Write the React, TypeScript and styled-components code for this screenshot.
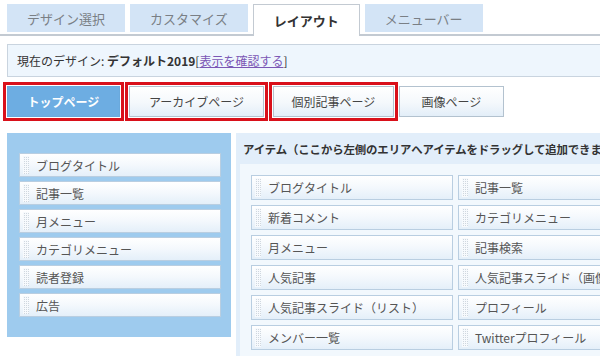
import React from "react";
import styled, { createGlobalStyle } from "styled-components";

const Global = createGlobalStyle`
  html, body { margin: 0; padding: 0; background: #fff; overflow: hidden; }
  body { font-family: "Noto Sans CJK JP", "Noto Sans", sans-serif; color: #444; width: 600px; height: 356px; }
`;

const Page = styled.div`
  width: 600px;
  height: 356px;
  overflow: hidden;
`;

const TabBar = styled.div`
  display: flex;
  align-items: flex-end;
  gap: 5px;
  height: 34px;
  padding-left: 7px;
  border-bottom: 2px solid #c3cad2;
  width: 900px;
`;

const Tab = styled.div<{ $active?: boolean }>`
  display: flex;
  align-items: center;
  justify-content: center;
  box-sizing: border-box;
  padding: 0 20px;
  min-width: ${(p) => (p.$active ? "106px" : "116px")};
  height: ${(p) => (p.$active ? "32px" : "28px")};
  margin-bottom: ${(p) => (p.$active ? "-2px" : "2px")};
  background: ${(p) => (p.$active ? "#fff" : "#d3e4f6")};
  border: ${(p) => (p.$active ? "1px solid #c3cad2" : "none")};
  border-bottom: none;
  font-size: 13px;
  font-weight: ${(p) => (p.$active ? 700 : 400)};
  color: ${(p) => (p.$active ? "#333" : "#7a7f85")};
`;

const Info = styled.div`
  margin: 8px 0 0 7px;
  width: 700px;
  height: 33px;
  box-sizing: border-box;
  background: #eef6fd;
  border: 1px solid #c9d4df;
  display: flex;
  align-items: center;
  padding-left: 9px;
  font-size: 12px;
  color: #333;
  white-space: pre;
`;

const Bold = styled.b`
  font-weight: 700;
`;

const Link = styled.span`
  color: #7b57b5;
  text-decoration: underline;
`;

const ButtonRow = styled.div`
  display: flex;
  align-items: center;
  gap: 1px;
  margin: 5px 0 0 3px;
  height: 39px;
`;

const Slot = styled.div<{ $mark?: boolean }>`
  box-sizing: border-box;
  height: 39px;
  display: flex;
  align-items: center;
  padding: ${(p) => (p.$mark ? "0 1px" : "0")};
  border: ${(p) => (p.$mark ? "3px solid #d9101a" : "none")};
`;

const PageButton = styled.div<{ $selected?: boolean; $w: number }>`
  box-sizing: border-box;
  width: ${(p) => p.$w}px;
  height: 31px;
  display: flex;
  align-items: center;
  justify-content: center;
  font-size: 12px;
  border: 1px solid ${(p) => (p.$selected ? "#6aa9dc" : "#b3c2cf")};
  background: ${(p) =>
    p.$selected ? "#6dade2" : "linear-gradient(#ffffff, #f4f8fc 55%, #e3eef8)"};
  color: ${(p) => (p.$selected ? "#fff" : "#444")};
  font-weight: ${(p) => (p.$selected ? 700 : 400)};
`;

const Main = styled.div`
  display: flex;
  align-items: flex-start;
  gap: 5px;
  margin: 12px 0 0 7px;
`;

const LeftPanel = styled.div`
  flex: none;
  width: 224px;
  box-sizing: border-box;
  background: #9ecbee;
  padding: 20px 10px 20px 12px;
  display: flex;
  flex-direction: column;
  gap: 4px;
`;

const RightPanel = styled.div`
  flex: none;
  width: 420px;
  height: 240px;
  background: #e2eefa;
  padding-left: 4px;
  box-sizing: border-box;
`;

const RightHeader = styled.div`
  height: 31px;
  display: flex;
  align-items: center;
  padding-left: 3px;
  font-size: 11.4px;
  font-weight: 700;
  color: #333;
  white-space: nowrap;
  letter-spacing: -0.1px;
`;

const RightBody = styled.div`
  background: #f2f8fd;
  height: 220px;
  padding: 11px 0 0 11px;
  display: grid;
  grid-template-columns: 202px 202px;
  grid-auto-rows: 25px;
  column-gap: 5px;
  row-gap: 5px;
  align-content: start;
`;

const Item = styled.div<{ $h?: number }>`
  box-sizing: border-box;
  height: ${(p) => p.$h ?? 25}px;
  display: flex;
  align-items: center;
  background: linear-gradient(#ffffff, #f5f9fd 45%, #e4eff9);
  border: 1px solid #b9cee1;
  font-size: 12px;
  color: #555;
  white-space: nowrap;
  overflow: hidden;
`;

const Grip = styled.span`
  width: 6px;
  height: calc(100% - 4px);
  margin: 0 7px 0 3px;
  flex: none;
  background-color: #cfd7df;
  background-image: linear-gradient(90deg, #f7fafd 1px, transparent 1px),
    linear-gradient(#f7fafd 1px, transparent 1px);
  background-size: 2px 2px;
`;

const leftItems = ["ブログタイトル", "記事一覧", "月メニュー", "カテゴリメニュー", "読者登録", "広告"];
const rightItems = [
  "ブログタイトル",
  "記事一覧",
  "新着コメント",
  "カテゴリメニュー",
  "月メニュー",
  "記事検索",
  "人気記事",
  "人気記事スライド（画像大）",
  "人気記事スライド（リスト）",
  "プロフィール",
  "メンバー一覧",
  "Twitterプロフィール",
];

export default function App() {
  return (
    <Page>
      <Global />
      <TabBar>
        <Tab>デザイン選択</Tab>
        <Tab>カスタマイズ</Tab>
        <Tab $active>レイアウト</Tab>
        <Tab>メニューバー</Tab>
      </TabBar>
      <Info>
        {"現在のデザイン: "}
        <Bold>デフォルト2019</Bold>[<Link>表示を確認する</Link>]
      </Info>
      <ButtonRow>
        <Slot $mark>
          <PageButton $selected $w={113}>トップページ</PageButton>
        </Slot>
        <Slot $mark>
          <PageButton $w={135}>アーカイブページ</PageButton>
        </Slot>
        <Slot $mark>
          <PageButton $w={121}>個別記事ページ</PageButton>
        </Slot>
        <Slot>
          <PageButton $w={105}>画像ページ</PageButton>
        </Slot>
      </ButtonRow>
      <Main>
        <LeftPanel>
          {leftItems.map((t) => (
            <Item key={t} $h={24}>
              <Grip />
              {t}
            </Item>
          ))}
        </LeftPanel>
        <RightPanel>
          <RightHeader>アイテム（ここから左側のエリアへアイテムをドラッグして追加できます）</RightHeader>
          <RightBody>
            {rightItems.map((t) => (
              <Item key={t}>
                <Grip />
                {t}
              </Item>
            ))}
          </RightBody>
        </RightPanel>
      </Main>
    </Page>
  );
}
